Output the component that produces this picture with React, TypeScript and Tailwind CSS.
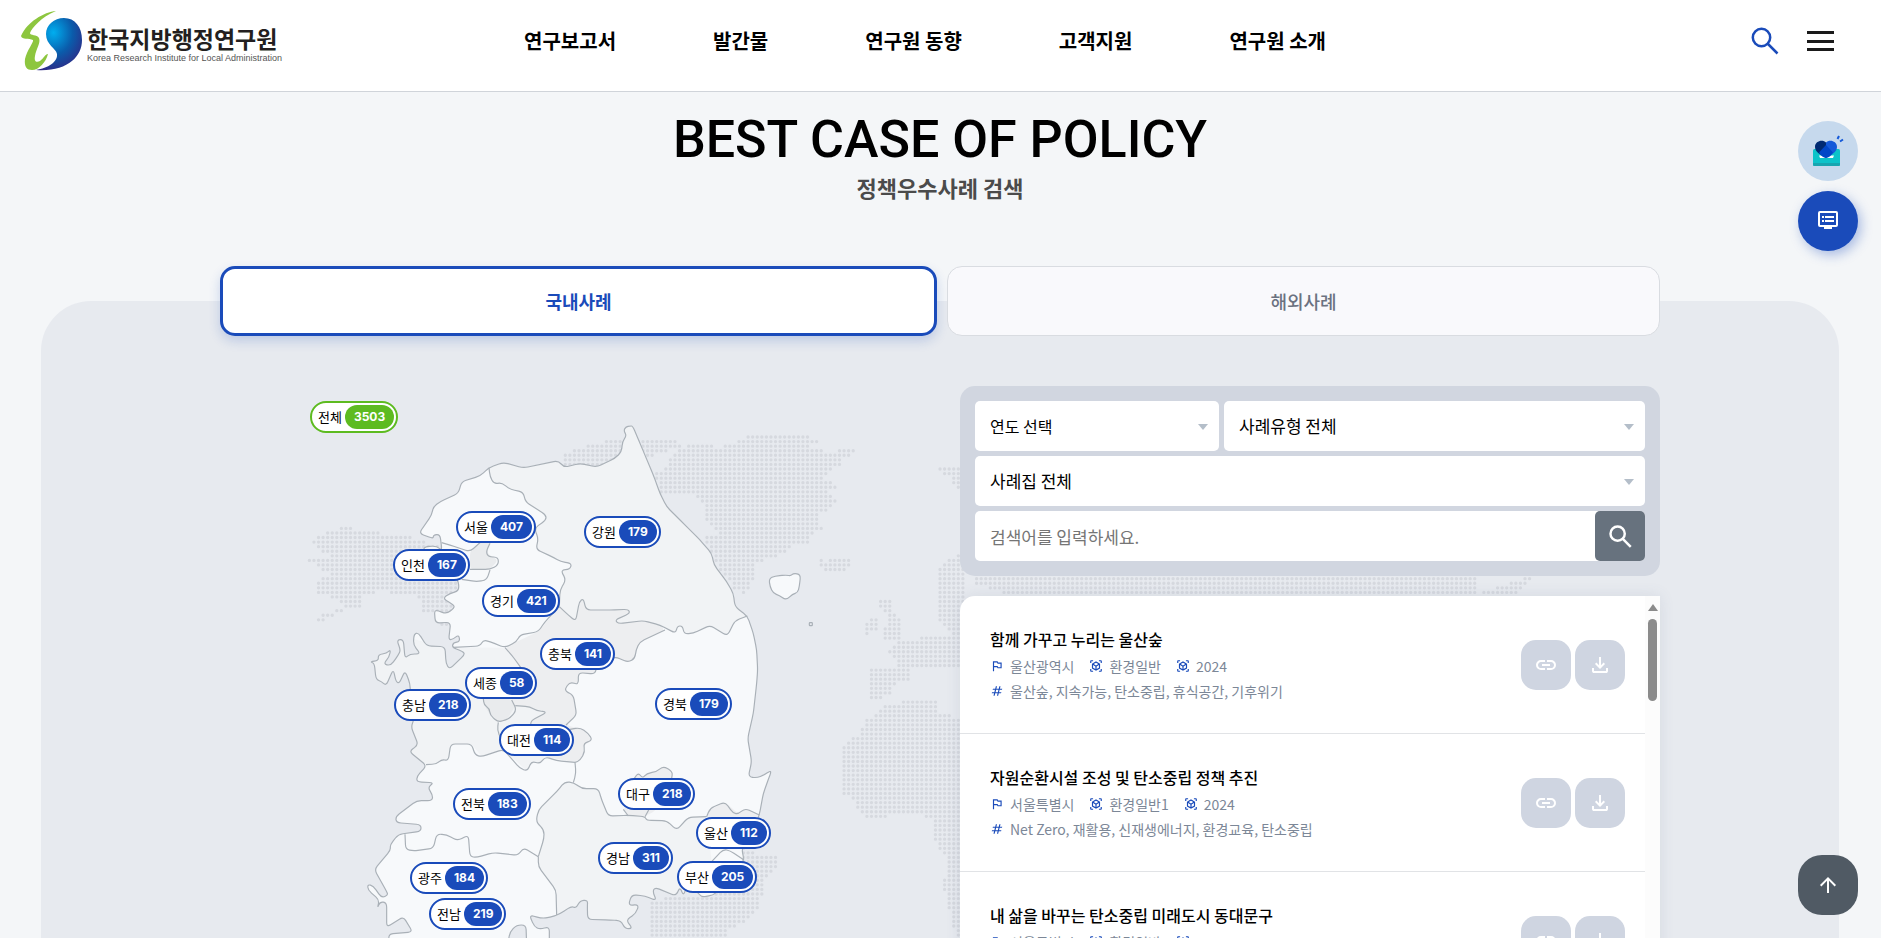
import { MdOutlinedFlag, MdViewInAr } from 'react-icons/md';

type Point = [number, number];

const menus = ['연구보고서', '발간물', '연구원 동향', '고객지원', '연구원 소개'];

const pins = [
  { name: '서울', count: 407, left: 236, top: 125 },
  { name: '인천', count: 167, left: 173, top: 163 },
  { name: '경기', count: 421, left: 262, top: 199 },
  { name: '강원', count: 179, left: 364, top: 130 },
  { name: '충북', count: 141, left: 320, top: 252 },
  { name: '세종', count: 58, left: 245, top: 281 },
  { name: '충남', count: 218, left: 174, top: 303 },
  { name: '대전', count: 114, left: 279, top: 338 },
  { name: '전북', count: 183, left: 233, top: 402 },
  { name: '광주', count: 184, left: 190, top: 476 },
  { name: '전남', count: 219, left: 209, top: 512 },
  { name: '경북', count: 179, left: 435, top: 302 },
  { name: '대구', count: 218, left: 398, top: 392 },
  { name: '울산', count: 112, left: 476, top: 431 },
  { name: '경남', count: 311, left: 378, top: 456 },
  { name: '부산', count: 205, left: 457, top: 475 },
];

const cases = [
  {
    title: '함께 가꾸고 누리는 울산숲',
    region: '울산광역시',
    category: '환경일반',
    year: '2024',
    tags: '울산숲, 지속가능, 탄소중립, 휴식공간, 기후위기',
  },
  {
    title: '자원순환시설 조성 및 탄소중립 정책 추진',
    region: '서울특별시',
    category: '환경일반1',
    year: '2024',
    tags: 'Net Zero, 재활용, 신재생에너지, 환경교육, 탄소중립',
  },
  {
    title: '내 삶을 바꾸는 탄소중립 미래도시 동대문구',
    region: '서울특별시',
    category: '환경일반',
    year: '2024',
    tags: '탄소중립, 미래도시, 동대문구',
  },
];

// "x,y x,y ..." -> points
const parse = (text: string): Point[] =>
  text.trim().split(/\s+/).map((pair) => pair.split(',').map(Number) as Point);

// point on the edge a-b, a short way from a
function near(a: Point, b: Point) {
  const length = Math.hypot(b[0] - a[0], b[1] - a[1]) || 1;
  const t = Math.min(0.5, 14 / length);
  return `${a[0] + (b[0] - a[0]) * t} ${a[1] + (b[1] - a[1]) * t}`;
}

// polyline with softened corners
function curve(text: string, closed = false) {
  const p = parse(text);
  const n = p.length;
  if (closed) {
    return (
      p
        .map((v, i) => `${i ? 'L' : 'M'}${near(v, p[(i + n - 1) % n])}Q${v[0]} ${v[1]} ${near(v, p[(i + 1) % n])}`)
        .join('') + 'Z'
    );
  }
  let d = `M${p[0][0]} ${p[0][1]}`;
  for (let i = 1; i < n - 1; i++) {
    d += `L${near(p[i], p[i - 1])}Q${p[i][0]} ${p[i][1]} ${near(p[i], p[i + 1])}`;
  }
  return d + `L${p[n - 1][0]} ${p[n - 1][1]}`;
}

/* map drawing units: three per pixel */
const coast =
  '1020,138 1028,138 1050,190 1090,285 1110,340 1130,380 1180,430 1230,480 1265,520 1272,555 1310,605 1330,640 1335,680 1372,708 1390,760 1400,810 1403,870 1400,910 1390,1000 1373,1075 1385,1145 1375,1190 1400,1194 1422,1185 1442,1172 1442,1180 1438,1190 1420,1240 1408,1305 1385,1360 1355,1405 1362,1440 1330,1500 1280,1535 1270,1545 1235,1552 1225,1538 1190,1520 1180,1548 1170,1520 1158,1548 1095,1522 1088,1535 1100,1562 1065,1548 1025,1544 1015,1577 1047,1573 1038,1600 1008,1620 1028,1646 1005,1646 993,1622 960,1620 893,1618 892,1580 893,1560 870,1562 858,1585 845,1578 810,1602 780,1612 755,1615 718,1605 733,1640 750,1648 778,1640 778,1700 710,1700 708,1635 680,1635 660,1655 652,1700 300,1700 295,1662 368,1656 340,1610 290,1642 290,1568 270,1565 262,1585 268,1560 234,1530 233,1513 250,1518 275,1554 294,1545 290,1535 253,1468 302,1410 300,1395 325,1363 393,1354 393,1334 319,1328 317,1310 380,1262 427,1262 428,1245 413,1222 432,1208 381,1206 380,1190 410,1157 357,1114 385,1095 363,1040 372,1020 362,960 360,910 345,872 328,910 318,905 310,868 288,917 275,905 258,898 253,850 240,845 266,842 264,824 290,820 302,808 298,830 280,852 302,857 325,825 332,810 320,780 340,778 345,835 360,822 392,822 370,795 372,762 385,758 410,798 465,800 468,850 478,868 524,824 520,815 486,802 490,788 510,785 506,764 490,777 476,780 482,727 436,729 433,688 470,702 497,680 480,668 458,655 480,640 507,633 505,600 450,560 400,510 405,500 440,498 456,512 450,463 430,465 430,476 387,460 425,405 430,380 450,365 505,340 515,305 570,288 597,263 640,247 700,264 805,242 822,262 870,250 920,261 975,235 995,215 997,185 1010,167 1001,152 1008,140';

const gangwonWest =
  '597,263 600,290 612,312 635,308 660,328 700,336 706,365 768,405 768,420 733,445 745,475 738,508 790,532 812,545 845,550 840,568 812,570 828,600 810,630 808,680';
const gangwonSouth =
  '808,680 835,705 857,724 868,665 880,655 888,690 960,690 1015,688 1020,700 975,720 985,731 1060,722 1110,735 1157,760 1162,738 1178,738 1182,762 1210,760 1260,736 1312,768 1335,722 1372,708';
const gyeonggiSouth = '808,680 765,725 745,755 690,765 680,785 645,803 600,785 580,780 570,798 490,802';
const chungbukEast =
  '1125,750 1050,785 1038,810 1035,835 1015,847 975,830 920,860 915,882 865,878 865,915 840,905 822,932 850,945 860,1005 828,1035';
const jeonbukNorth =
  '408,1154 440,1152 455,1138 475,1142 482,1092 545,1092 555,1125 575,1130 640,1108 690,1165 712,1174 725,1143 750,1152 765,1130 800,1142 855,1147';
const gyeongnamNorth =
  '745,1430 762,1375 762,1350 738,1325 745,1290 800,1235 825,1205 852,1208 875,1226 925,1226 935,1260 955,1308 1015,1306 1065,1310 1070,1321 1130,1322 1160,1350 1195,1312 1250,1310';
const jeonnamNorth =
  '345,1363 347,1408 370,1413 430,1405 440,1362 470,1364 503,1382 535,1365 540,1430 560,1432 610,1418 685,1426 700,1403 745,1430';

const regions = [
  { fill: '#f1f3f5', shape: `${gangwonWest} ${gangwonSouth} 1500,700 1500,100 590,100` },
  { fill: '#edeef0', shape: `${gangwonSouth.split(' ').slice(0, -9).join(' ')} ${chungbukEast} 880,1050 908,1082 880,1095 880,1130 855,1147 765,1130 625,1027 690,860 645,803 680,785 745,755 808,680` },
  { fill: '#f1f3f5', shape: `200,740 480,802 645,803 690,860 625,1027 640,1108 575,1130 545,1092 482,1092 475,1142 408,1154 200,1154` },
  { fill: '#f1f3f5', shape: `${gyeongnamNorth} 1265,1445 1225,1540 1200,1700 800,1700 800,1600 798,1535 748,1465` },
  { fill: '#e9ebed', shape: '580,940 582,975 600,1005 625,1027 660,1015 678,990 665,960' },
  { fill: '#f1f3f5', shape: '625,1027 650,1020 676,977 720,980 768,996 723,1022 722,1045 765,1130 750,1152 725,1143 712,1174 640,1108' },
  { fill: '#edeef0', shape: '1250,1310 1260,1290 1305,1266 1345,1302 1365,1285 1408,1305 1380,1360' },
  { fill: '#edeef0', shape: '1033,1195 1045,1178 1060,1195 1070,1180 1100,1175 1120,1158 1148,1180 1145,1200 1100,1290 1065,1310 1015,1308 1000,1288' },
  { fill: '#e9ebed', shape: '540,512 590,470 600,490 590,520 625,540 600,568 540,568' },
];

const borders = [
  gangwonWest,
  gangwonSouth,
  gyeonggiSouth,
  chungbukEast,
  jeonbukNorth,
  gyeongnamNorth,
  jeonnamNorth,
  '645,803 665,825 692,862',
  '580,955 582,975 598,985 600,1005 625,1027 660,1015 680,990 665,960',
  '625,1027 622,1050 632,1075',
  '676,977 720,980 740,992 772,996 723,1022 722,1038',
  '855,1147 870,1142 885,1115 880,1090 908,1081 895,1060 870,1043 840,1048',
  '855,1147 858,1180 850,1208',
  '745,1430 745,1460 798,1530 800,1605',
  '455,488 480,495 540,515 590,470',
  '600,490 588,515 595,530 625,532 625,555 600,568 540,568',
  '600,570 590,600 560,605 515,598',
  '1250,1310 1260,1285 1305,1266 1330,1300 1345,1302 1365,1285 1408,1305',
  '1033,1195 1045,1178 1058,1195 1070,1180 1100,1175 1120,1158 1148,1175 1145,1195',
  '1000,1288 1015,1308',
  '1065,1310 1076,1290',
  '1265,1445 1300,1408 1320,1412 1362,1440',
];

const island = '1437,596 1455,588 1490,585 1502,588 1510,580 1532,583 1528,620 1523,638 1508,642 1488,661 1468,646 1450,640 1440,620';

const continents = [
  '65,480 110,458 160,438 185,440 200,453 265,453 290,466 345,464 385,480 460,500 520,600 500,690 480,740 450,738 440,700 400,697 395,665 370,640 310,640 270,628 250,645 210,650 215,682 165,685 170,670 120,655 115,642 80,640 80,598 120,590 110,577 75,562 75,550 52,547 52,535 120,530 125,517 80,512 80,498 120,497 65,492',
  '78,717 105,700 150,685 160,695 120,715 88,727',
  '820,265 822,225 860,205 920,190 970,178 1160,176 1178,200 1130,212 1130,222 1080,228 1000,300',
  '1095,272 1125,272 1150,218 1180,203 1220,190 1290,203 1360,178 1362,163 1410,170 1555,166 1560,178 1600,178 1572,188 1560,206 1600,208 1605,223 1642,218 1642,206 1697,206 1697,218 1668,230 1650,253 1625,268 1600,290 1615,303 1642,322 1612,335 1642,360 1615,395 1580,405 1580,425 1602,447 1570,455 1562,492 1510,500 1450,535 1397,545 1397,575 1380,632 1358,642 1330,625 1300,580 1275,550 1240,472 1290,455 1250,430 1250,380 1210,345 1110,342',
  '1575,534 1597,536 1605,545 1615,534 1680,538 1687,555 1665,574 1605,574',
  '1768,662 1800,662 1805,700 1785,702 1768,680',
  '1726,723 1766,712 1768,750 1728,765',
  '1798,696 1832,710 1832,778 1784,780 1784,750',
  '1830,780 2010,760 2010,870 1930,862 1820,865 1825,840 1793,822 1810,803',
  '1738,868 1862,868 1855,905 1820,912 1795,950 1743,957',
  '1780,975 1855,963 1942,958 1950,1000 2010,1015 2010,1700 1998,1674 1988,1640 1975,1580 1960,1520 1975,1440 1938,1400 1932,1320 1900,1308 1868,1298 1740,1316 1708,1300 1693,1260 1656,1240 1656,1115 1668,1085 1708,1060 1722,1025 1755,1005',
  '1080,1570 1160,1545 1240,1550 1360,1520 1360,1398 1390,1418 1460,1425 1465,1460 1430,1490 1410,1580 1370,1620 1310,1650 1310,1700 1080,1700',
  '1950,258 2030,256 2030,330 1998,330 1980,290 1950,280',
  '1950,560 2030,500 2030,800 1950,720',
  '2055,580 3560,580 3560,640 3730,588 3730,600 3680,642 2180,650 2055,610',
].map(parse);

const inside = ([x, y]: Point, shape: Point[]) =>
  shape.reduce((hit, [x1, y1], i) => {
    const [x2, y2] = shape[(i + shape.length - 1) % shape.length];
    return y1 > y !== y2 > y && x < ((x2 - x1) * (y - y1)) / (y2 - y1) + x1 ? !hit : hit;
  }, false);

const STEP = 13.71;
const dots: Point[] = [];
for (let row = 0; row < 112; row++) {
  for (let col = 0; col < 276; col++) {
    const dot: Point = [17 + col * STEP, 171 + row * STEP];
    if (continents.some((shape) => inside(dot, shape))) dots.push(dot);
  }
}

function WorldMap() {
  return (
    <svg className="absolute top-0 left-0 h-[552px] w-[1440px]" viewBox="220 386 1440 552" aria-hidden="true">
      <defs>
        <clipPath id="land">
          <path d={curve(coast, true)} />
        </clipPath>
      </defs>
      <g transform="translate(290 380) scale(.33333)">
        <path fill="#d6d9df" d={dots.map(([x, y]) => `M${x - 5} ${y}a5 5 0 1 0 10 0a5 5 0 1 0 -10 0`).join('')} />
        <path fill="#f7f9fb" d={curve(coast, true)} />
        <g clipPath="url(#land)">
          {regions.map((region, i) => (
            <path key={i} fill={region.fill} d={curve(region.shape, true)} />
          ))}
        </g>
        <g fill="none" stroke="#a9b0b7" strokeWidth="3.5" strokeLinejoin="round">
          <path d={curve(coast, true)} />
          {borders.map((line, i) => (
            <path key={i} d={curve(line)} />
          ))}
          <path fill="#f7f9fb" d={curve(island, true)} />
          <rect x="1558" y="728" width="9" height="9" rx="2" />
        </g>
      </g>
    </svg>
  );
}

function Logo() {
  return (
    <a href="#" className="flex items-center justify-self-start">
      <svg className="h-[62px] w-[68px]" viewBox="16 10 68 62" aria-hidden="true">
        <defs>
          <radialGradient id="drop" cx="0.38" cy="0.28" r="0.75">
            <stop offset="0" stopColor="#00aeef" />
            <stop offset="0.55" stopColor="#0a5cab" />
            <stop offset="1" stopColor="#2e2a86" />
          </radialGradient>
        </defs>
        <path
          fill="#8dc63f"
          d="M56 11C44 12 27 22 21 36c1 4 8 2 12 4c1 2-6 10-8 19c-1 8 2 11 7 11c7 0 14-8 16-16c-3 0-4 4-8 7c-4 2-6 0-5-5c1-7 6-13 4-18c-2-4-9-2-9-5C32 28 41 17 56 11Z"
        />
        <path
          fill="url(#drop)"
          d="M64 18c11 0 18 9 18 22c0 17-15 32-46 30c12-2 22-8 21-16c-1-6-11-9-11-20c0-9 8-16 18-16Z"
        />
      </svg>
      <span className="flex flex-col gap-px pt-1 pl-[3px]">
        <span className="text-[23px] leading-7 font-bold text-[#231f20]">한국지방행정연구원</span>
        <span className="font-['Liberation_Sans',sans-serif] text-[9px] leading-[10px] text-[#555]">
          Korea Research Institute for Local Administration
        </span>
      </span>
    </a>
  );
}

function SearchIcon({ className }: { className: string }) {
  return (
    <svg className={className} viewBox="0 0 28 28" fill="none" stroke="currentColor" aria-hidden="true">
      <circle cx="10.500" cy="10.500" r="8.700" />
      <path d="M16.500 16.500 26.500 26.500" />
    </svg>
  );
}

function Header() {
  return (
    <header className="grid grid-cols-[1fr_auto_1fr] items-center border-b border-[#d0d4da] bg-white pt-[10px] pr-[47px] pb-[19px] pl-4">
      <Logo />
      <nav className="flex gap-[97px] text-xl font-bold">
        {menus.map((menu) => (
          <a key={menu} href="#">
            {menu}
          </a>
        ))}
      </nav>
      <div className="flex items-center gap-7 justify-self-end">
        <button aria-label="검색" className="text-[#1a4bba]">
          <SearchIcon className="size-7 stroke-[2.500]" />
        </button>
        <button aria-label="전체메뉴" className="flex h-5 w-[27px] flex-col justify-between">
          <span className="h-[3px] bg-[#1a1a1a]" />
          <span className="h-[3px] bg-[#1a1a1a]" />
          <span className="h-[3px] bg-[#1a1a1a]" />
        </button>
      </div>
    </header>
  );
}

function Pin({ name, count, total = false }: { name: string; count: number; total?: boolean }) {
  return (
    <button
      className={`flex h-8 items-center gap-[3px] rounded-full border-2 bg-white pr-0.5 pl-1.5 text-[13px] whitespace-nowrap ${
        total ? 'border-[#5dbb20]' : 'border-[#1a4bba]'
      }`}
    >
      {name}
      <b
        className={`rounded-full px-[9px] font-['Inter',sans-serif] text-xs leading-6 text-white ${
          total ? 'bg-[#5dbb20]' : 'bg-[#1a4bba]'
        }`}
      >
        {count}
      </b>
    </button>
  );
}

function Select({ label, className }: { label: string; className: string }) {
  return (
    <div className={`relative ${className}`}>
      <select aria-label={label} className="h-[50px] w-full appearance-none rounded-[5px] bg-white px-[15px]">
        <option>{label}</option>
      </select>
      <span className="pointer-events-none absolute top-[23px] right-[11px] border-x-5 border-t-6 border-x-transparent border-t-[#b4bec9]" />
    </div>
  );
}

function SearchForm() {
  return (
    <form className="flex flex-col gap-[5px] rounded-[15px] bg-[#d1d6e0] p-[15px] text-[17px]">
      <div className="flex gap-[5px]">
        <Select label="연도 선택" className="w-[244px] text-base" />
        <Select label="사례유형 전체" className="flex-1" />
      </div>
      <Select label="사례집 전체" className="w-full" />
      <div className="flex h-[50px] items-center rounded-[5px] bg-white">
        <input
          aria-label="검색어"
          placeholder="검색어를 입력하세요."
          className="h-full min-w-0 flex-1 px-[15px] outline-none placeholder:text-[#757575]"
        />
        <button type="button" aria-label="검색" className="flex size-[50px] items-center justify-center rounded-[5px] bg-[#67727e] text-white">
          <SearchIcon className="size-[23px] stroke-3" />
        </button>
      </div>
    </form>
  );
}

function TagIcon() {
  return (
    <svg className="size-3.5 text-[#1a4bba]" viewBox="0 -960 960 960" fill="currentColor" aria-hidden="true">
      <path d="m240-160 40-160H120l20-80h160l40-160H180l20-80h160l40-160h80l-40 160h160l40-160h80l-40 160h160l-20 80H660l-40 160h160l-20 80H600l-40 160h-80l40-160H360l-40 160h-80Zm140-240h160l40-160H420l-40 160Z" />
    </svg>
  );
}

function CaseItem({ item }: { item: (typeof cases)[number] }) {
  return (
    <li className="flex h-[138px] items-center justify-between border-b border-[#e1e3e6] pr-5 pl-[30px]">
      <div className="flex flex-col pb-0.5">
        <a href="#" className="text-base leading-[30px] font-medium">
          {item.title}
        </a>
        <div className="flex items-center gap-[15px] text-sm leading-[25px] text-[#7c8797]">
          <span className="flex items-center gap-1.5">
            <MdOutlinedFlag className="text-[#1a4bba]" />
            {item.region}
          </span>
          <span className="flex items-center gap-1.5">
            <MdViewInAr className="text-[#1a4bba]" />
            {item.category}
          </span>
          <span className="flex items-center gap-1.5">
            <MdViewInAr className="text-[#1a4bba]" />
            {item.year}
          </span>
        </div>
        <div className="flex items-center gap-1.5 text-sm leading-[25px] text-[#7c8797]">
          <TagIcon />
          {item.tags}
        </div>
      </div>
      <div className="flex gap-1">
        <button aria-label="링크" className="flex size-[50px] items-center justify-center rounded-[15px] bg-[#cfd5e1] text-white">
          <svg className="size-6" viewBox="0 -960 960 960" fill="currentColor" aria-hidden="true">
            <path d="M440-280H280q-83 0-141.500-58.500T80-480q0-83 58.500-141.500T280-680h160v80H280q-50 0-85 35t-35 85q0 50 35 85t85 35h160v80ZM320-440v-80h320v80H320Zm200 160v-80h160q50 0 85-35t35-85q0-50-35-85t-85-35H520v-80h160q83 0 141.500 58.500T880-480q0 83-58.500 141.500T680-280H520Z" />
          </svg>
        </button>
        <button aria-label="다운로드" className="flex size-[50px] items-center justify-center rounded-[15px] bg-[#cfd5e1] text-white">
          <svg className="size-6" viewBox="0 -960 960 960" fill="currentColor" aria-hidden="true">
            <path d="M480-320 280-520l56-58 104 104v-326h80v326l104-104 56 58-200 200ZM240-160q-33 0-56.500-23.500T160-240v-120h80v120h480v-120h80v120q0 33-23.500 56.500T720-160H240Z" />
          </svg>
        </button>
      </div>
    </li>
  );
}

function CaseList() {
  return (
    <div className="flex h-[600px] overflow-hidden rounded-tl-[15px] bg-white shadow-[0_0_15px_rgba(80,100,130,0.12)]">
      <ul className="min-w-0 flex-1">
        {cases.map((item) => (
          <CaseItem key={item.title} item={item} />
        ))}
      </ul>
      <div className="flex w-[15px] flex-col items-center gap-2 bg-[#fcfcfc] pt-2">
        <span className="border-x-5 border-b-7 border-x-transparent border-b-[#8b8b8b]" />
        <span className="h-[82px] w-[9px] rounded-full bg-[#8b8b8b]" />
      </div>
    </div>
  );
}

function QuickButtons() {
  return (
    <aside>
      <div className="fixed top-[121px] right-[23px] flex flex-col gap-2.5">
        <button aria-label="고객만족" className="size-[60px] rounded-full bg-[#c6d9ed]">
          <svg viewBox="0 0 60 60" aria-hidden="true">
            <rect x="15" y="28" width="27" height="17" rx="1.500" fill="#0cc3c9" />
            <path d="M15 42h27v1.500a1.500 1.500 0 0 1-1.500 1.500h-24a1.500 1.500 0 0 1-1.500-1.500Z" fill="#17a5b0" />
            <path d="M21 34.500h15l-1 2.500H22Z" fill="#fff" />
            <path d="M28 21.500c-3-3.500-11-2-11 4.500c0 5 6 8 11 11Z" fill="#002a72" />
            <path d="M28 21.500c3-3.500 11-2 11 4.500c0 5-6 8-11 11Z" fill="#1459d9" />
            <path d="M28 24 35 31.500c-2 3-4.500 5.500-7 5.500s-5-2.500-7-5.500Z" fill="#0046c7" />
            <path d="m39.500 18 1.500-3M42 20.500l3-2" stroke="#1459d9" strokeWidth="2" />
          </svg>
        </button>
        <button aria-label="목록" className="size-[60px] rounded-full bg-[#1a4bba] shadow-[3px_4px_12px_rgba(26,75,186,0.35)]">
          <svg viewBox="0 0 60 60" aria-hidden="true">
            <rect x="21" y="21" width="18" height="14" rx="1" fill="none" stroke="#fff" strokeWidth="2" />
            <path d="M24 25h2v2h-2zM27 25h9v2h-9zM24 29h2v2h-2zM27 29h9v2h-9zM26 36h8v2h-8z" fill="#fff" />
          </svg>
        </button>
      </div>
      <button
        aria-label="맨 위로"
        className="fixed right-[23px] bottom-[23px] flex size-[60px] items-center justify-center rounded-3xl bg-[#505a64] text-white"
      >
        <svg className="size-6" viewBox="0 -960 960 960" fill="currentColor" aria-hidden="true">
          <path d="M440-160v-487L216-423l-56-57 320-320 320 320-56 57-224-224v487h-80Z" />
        </svg>
      </button>
    </aside>
  );
}

function App() {
  return (
    <div className="h-screen overflow-hidden bg-[#f4f6f8] font-['Noto_Sans_CJK_KR',sans-serif] text-black">
      <Header />

      <main className="pr-px">
        {/* Title */}
        <section className="pt-4 text-center">
          <h1 className="font-['Roboto',sans-serif] text-[52px] leading-[64px] font-medium">BEST CASE OF POLICY</h1>
          <p className="text-[22px] leading-[30px] font-bold text-[#4b4b4b]">정책우수사례 검색</p>
        </section>

        {/* Tabs */}
        <div role="tablist" className="relative z-10 mx-auto mt-16 flex max-w-[1440px] gap-2.5 text-lg">
          <button
            role="tab"
            aria-selected="true"
            className="h-[70px] flex-1 rounded-[15px] border-3 border-[#1a4bba] bg-white font-bold text-[#1a4bba] shadow-[0_5px_12px_rgba(26,75,186,0.2)]"
          >
            국내사례
          </button>
          <button
            role="tab"
            aria-selected="false"
            className="h-[70px] flex-1 rounded-[15px] border border-[#d9dce1] bg-[#f9f9fc] font-medium text-[#6b7280]"
          >
            해외사례
          </button>
        </div>

        <section className="mx-[41px] -mt-[35px] rounded-t-[50px] bg-[#e7eaef] pt-[85px]">
          <div className="relative mx-auto flex max-w-[1440px] justify-between">
            <WorldMap />
            {/* Map */}
            <div className="relative flex-1">
              <div className="absolute top-[15px] left-[90px]">
                <Pin name="전체" count={3503} total />
              </div>
              {pins.map((pin) => (
                <div key={pin.name} className="absolute" style={{ left: pin.left, top: pin.top }}>
                  <Pin name={pin.name} count={pin.count} />
                </div>
              ))}
            </div>

            {/* Search */}
            <div className="relative flex w-[700px] flex-col gap-5">
              <SearchForm />
              <CaseList />
            </div>
          </div>
        </section>
      </main>

      <QuickButtons />
    </div>
  );
}

export default App;
